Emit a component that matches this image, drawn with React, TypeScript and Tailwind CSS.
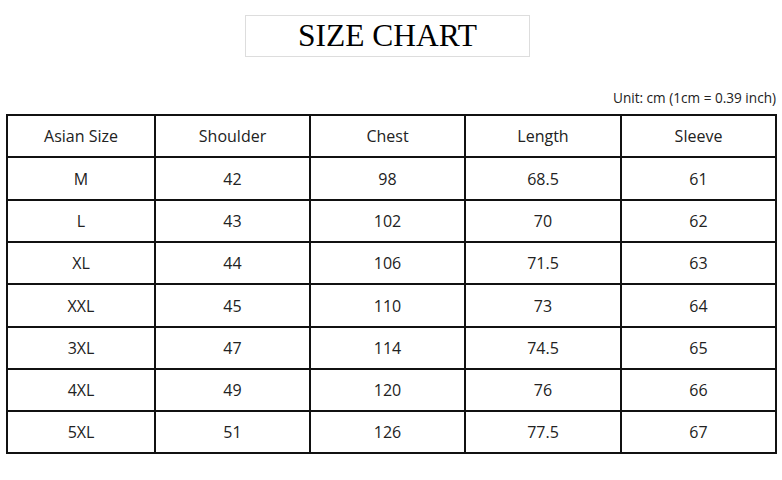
import React from "react";

const header = ["Asian Size", "Shoulder", "Chest", "Length", "Sleeve"];
const rows = [
  ["M", "42", "98", "68.5", "61"],
  ["L", "43", "102", "70", "62"],
  ["XL", "44", "106", "71.5", "63"],
  ["XXL", "45", "110", "73", "64"],
  ["3XL", "47", "114", "74.5", "65"],
  ["4XL", "49", "120", "76", "66"],
  ["5XL", "51", "126", "77.5", "67"],
];
const heights = ["h-[42px]", "h-[43px]", "h-[42px]", "h-[42px]", "h-[43px]", "h-[42px]", "h-[42px]", "h-[42px]"];

export default function App() {
  const all = [header, ...rows];
  return (
    <div className="w-[782px] h-[480px] bg-white flex flex-col" style={{ fontFamily: '"Open Sans", sans-serif' }}>
      <div className="mt-[15px] ml-[245px] w-[285px] h-[42px] border border-[#dddddd] flex items-center justify-center">
        <span className="text-[31.5px] leading-none text-black" style={{ fontFamily: '"Liberation Serif", serif' }}>SIZE CHART</span>
      </div>
      <div className="mt-[32px] h-[18px] leading-[18px] text-[13.6px] text-[#222] text-right pr-[6px]">
        Unit: cm (1cm = 0.39 inch)
      </div>
      <div className="mt-[7px] ml-[6px] w-[771px] border-l-2 border-t-2 border-[#111] grid grid-cols-[148px_155px_155px_156px_155px]">
        {all.map((r, i) =>
          r.map((c, j) => (
            <div
              key={`${i}-${j}`}
              className={`${heights[i]} border-r-2 border-b-2 border-[#111] flex items-center justify-center text-[16px] text-[#222]`}
            >
              {c}
            </div>
          ))
        )}
      </div>
    </div>
  );
}
